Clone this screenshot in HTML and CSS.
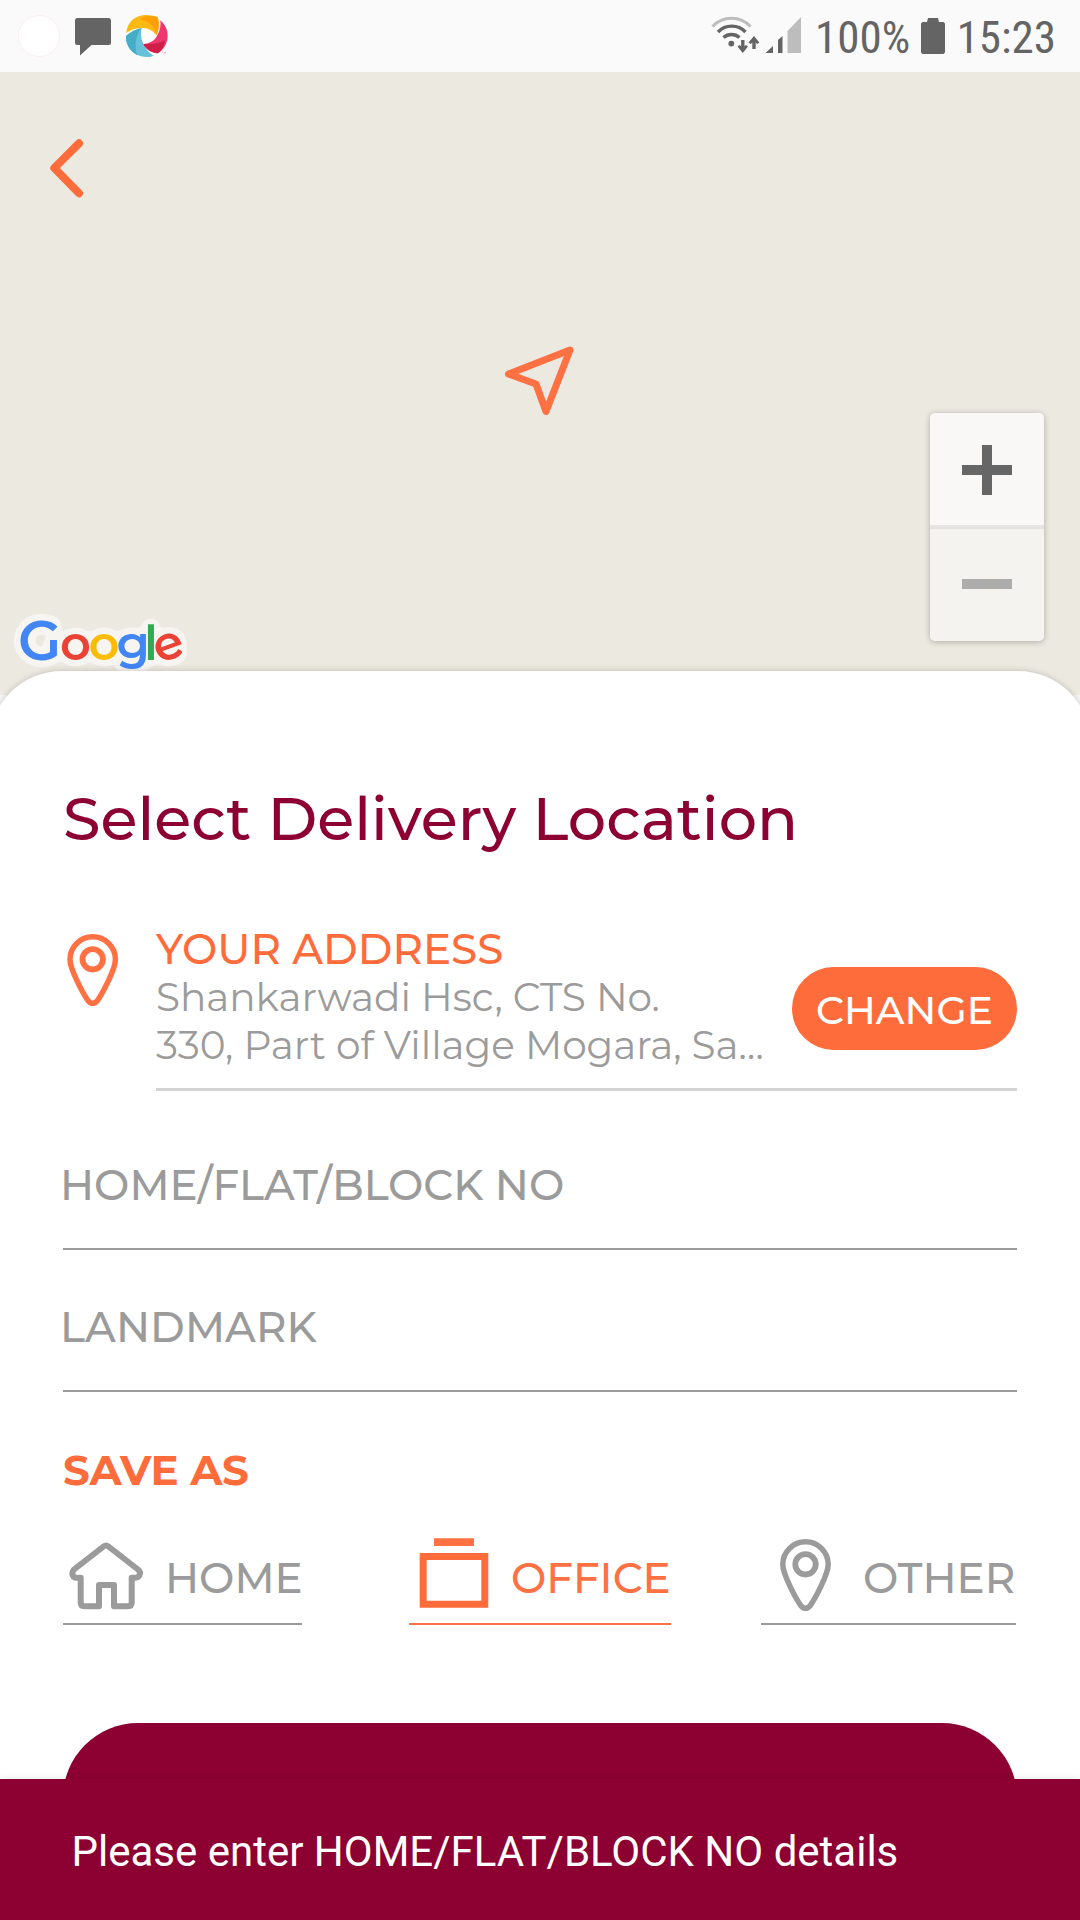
FILE: index.html
```html
<!DOCTYPE html>
<html lang="en">
<head>
<meta charset="utf-8">
<title>Select Delivery Location</title>
<link rel="stylesheet" href="styles.css">
</head>
<body>
<div class="screen">
  <header class="status">
    <div class="notifications">
      <span class="app-dot"></span>
      <svg class="chat" viewBox="0 0 36 38"><path d="M2.500 0h31A2.500 2.500 0 0 1 36 2.500v22a2.500 2.500 0 0 1-2.500 2.500H16.500L5 37.500V27H2.500A2.500 2.500 0 0 1 0 24.500v-22A2.500 2.500 0 0 1 2.500 0z" fill="#646464"/></svg>
      <svg class="swirl" viewBox="376 42 130 130">
        <circle cx="446" cy="108" r="30" fill="#fff"/>
        <path d="M380 99C382 68 405 45 441 45c14 0 25 3 33 7 6 18 4 40-4 54-8-12-22-22-42-22-20 0-36 6-48 15z" fill="#fdb913"/>
        <path d="M420 58c8-8 32-14 54-6 6 18 4 40-4 54-4-22-18-42-50-48z" fill="#fd9f06"/>
        <path d="M482 61c16 14 22 31 22 47 0 22-12 42-30 52-18-2-36-12-44-28 20-2 36-10 44-28 8-14 10-29 8-43z" fill="#ef366f"/>
        <path d="M430 132c25 3 49-2 66-11-2 19-10 33-22 39-18-2-36-12-44-28z" fill="#cf1f49"/>
        <path d="M379 108c13-12 29-20 47-24-4 16-2 36 8 54 8 14 18 24 28 29-10 4-16 4-21 4-36 0-63-29-62-63z" fill="#65c2da"/>
        <path d="M379 108c13-12 29-20 47-24-18 21-24 56-12 82-22-11-36-31-35-58z" fill="#46adc7"/>
        <path d="M487 157h4M494 161v-4l2 2 2-2v4" fill="none" stroke="#ef7f9f" stroke-width="1.500"/>
      </svg>
    </div>
    <div class="system">
      <svg class="signals" viewBox="0 0 115 72">
        <g fill="none">
          <path d="M12.500 26.500A26 26 0 0 1 50.500 26.500" stroke="#bdbdbd" stroke-width="3.200"/>
          <path d="M18 32A19 19 0 0 1 45.500 32" stroke="#646464" stroke-width="3.400"/>
          <path d="M23.500 37.500A12 12 0 0 1 39.500 37.500" stroke="#646464" stroke-width="3.400"/>
          <path d="M42.800 40v10M54 49V39" stroke="#646464" stroke-width="3.400"/>
        </g>
        <circle cx="31.300" cy="43.600" r="2.900" fill="#646464"/>
        <path d="M37.500 46.500l5.300 6.500 5.200-6.500-2-1.500-3.200 2.500-3.300-2.500zM48.500 42.500L54 36l5.300 6.500-2 1.500-3.300-2.500-3.300 2.500z" fill="#646464"/>
        <path d="M65.500 53l7.500-7v7zM78 40l4.500-4v17H78z" fill="#646464"/>
        <path d="M87.500 31L101 17v36H87.500z" fill="#bdbdbd"/>
      </svg>
      <span class="battery-level">100%</span>
      <svg class="battery" viewBox="0 0 24 36"><path d="M7 0h10l1 4h4.500L24 5.500V34.500L22.500 36h-21L0 34.500V5.500L1.500 4H6z" fill="#646464"/></svg>
      <span class="clock">15:23</span>
    </div>
  </header>

  <section class="map">
    <svg class="back" viewBox="0 0 40 64"><path d="M32 7.300L7.300 32 32 57.300" fill="none" stroke="#ff6c3b" stroke-width="8" stroke-linecap="round" stroke-linejoin="round"/></svg>
    <svg class="locate" viewBox="0 0 80 80"><path d="M8.500 34L70 10 46 71.500 36 44z" fill="none" stroke="#ff7043" stroke-width="7" stroke-linejoin="round"/></svg>
    <div class="zoom">
      <div class="zoom-in"><svg viewBox="0 0 50 50"><path d="M20 0h10v20h20v10H30v20H20V30H0V20h20z" fill="#666"/></svg></div>
      <div class="zoom-out"><svg viewBox="0 0 50 50"><path d="M0 20h50v10H0z" fill="#adadab"/></svg></div>
    </div>
    <svg class="google" viewBox="0 0 220 90">
      <filter id="halo" filterUnits="userSpaceOnUse" x="0" y="0" width="220" height="90" color-interpolation-filters="sRGB">
        <feGaussianBlur in="SourceAlpha" stdDeviation="4" result="soft"/>
        <feComponentTransfer in="soft" result="edge"><feFuncA type="linear" slope="28" intercept="-0.900"/></feComponentTransfer>
        <feFlood flood-color="#f6f5f2"/>
        <feComposite in2="edge" operator="in" result="outline"/>
        <feMerge><feMergeNode in="outline"/><feMergeNode in="SourceGraphic"/></feMerge>
      </filter>
      <text y="50" filter="url(#halo)"><tspan class="big" x="18" fill="#4285f4">G</tspan><tspan x="60" fill="#ea4335">o</tspan><tspan x="88.500" fill="#fbbc05">o</tspan><tspan x="116.500" fill="#4285f4">g</tspan><tspan x="144" fill="#34a853">l</tspan><tspan x="159" y="54" rotate="-20" fill="#ea4335">e</tspan></text>
    </svg>
  </section>

  <main class="sheet">
    <h1 class="title">Select Delivery Location</h1>

    <section class="address">
      <svg class="address-pin" viewBox="0 0 93 90"><g transform="translate(-14.800 3)" fill="none" stroke="#ff7043"><path stroke-width="5.500" d="M44.500 8.800C57 8.800 67.200 19 67.200 31.500C67.200 41 55 64 49.300 72.600Q44.500 78 39.700 72.600C34 64 21.800 41 21.800 31.500C21.800 19 32 8.800 44.500 8.800z"/><circle cx="44.500" cy="31.300" r="10.200" stroke-width="5.800"/></g></svg>
      <div class="address-body">
        <div class="address-text">
          <h2 class="address-label">YOUR ADDRESS</h2>
          <p class="address-lines">Shankarwadi Hsc, CTS No.<br>330, Part of Village Mogara, Sa…</p>
        </div>
        <button class="change">CHANGE</button>
      </div>
    </section>

    <div class="field">HOME/FLAT/BLOCK NO</div>
    <div class="field landmark">LANDMARK</div>

    <h2 class="save-as">SAVE AS</h2>
    <div class="options">
      <div class="option home">
        <svg viewBox="0 0 102 90"><path d="M40.500 13.500Q43 11.500 45.500 13.500L75 36.500Q78 39 76.500 42Q75.500 44.700 72.500 44.700H68.700V69.500Q68.700 73.300 65 73.300H51V52H36V73.300H21.500Q17.700 73.300 17.700 69.500V44.700H13.500Q10.500 44.700 9.600 42Q8.800 39 11 36.500z" fill="none" stroke="#9b9b9b" stroke-width="6" stroke-linejoin="round"/></svg>
        <span>HOME</span>
      </div>
      <div class="option office">
        <svg viewBox="0 0 102 90"><path d="M25 5.300h40v7.700H25z" fill="#ff7043"/><path d="M14.200 23.500h61.600v47.700H14.200z" fill="none" stroke="#ff6c3b" stroke-width="7"/></svg>
        <span>OFFICE</span>
      </div>
      <div class="option other">
        <svg viewBox="0 0 102 90"><g fill="none" stroke="#9b9b9b"><path stroke-width="5.500" d="M44.500 8.800C57 8.800 67.200 19 67.200 31.500C67.200 41 55 64 49.300 72.600Q44.500 78 39.700 72.600C34 64 21.800 41 21.800 31.500C21.800 19 32 8.800 44.500 8.800z"/><circle cx="44.500" cy="31.300" r="10.200" stroke-width="5.800"/></g></svg>
        <span>OTHER</span>
      </div>
    </div>

    <div class="submit"></div>
  </main>

  <div class="snackbar">Please enter HOME/FLAT/BLOCK NO details</div>
</div>
</body>
</html>
```
FILE: styles.css
```css
* { box-sizing: border-box; margin: 0; padding: 0; }

body {
  font-family: Montserrat, Inter, sans-serif;
  font-weight: 500;
  color: #9b9b9b;
}

svg { display: block; flex: none; }

.screen {
  position: relative;
  display: flex;
  flex-direction: column;
  width: 1080px;
  height: 1920px;
  overflow: hidden;
  background: #f6f6f6;
}

/* Status bar */
.status {
  display: flex;
  flex: none;
  justify-content: space-between;
  height: 72px;
  padding: 0 24px 0 18px;
  background: #fafafa;
}

.notifications { display: flex; align-items: flex-start; padding-top: 14px; }
.app-dot { width: 42px; height: 42px; margin-top: 1px; border: 1px solid #fbeeee; border-radius: 50%; background: #fff; }
.chat { width: 36px; height: 38px; margin: 4px 14px 0 15px; }
.swirl { width: 43.3px; height: 43.3px; }

.system {
  display: flex;
  width: 356px;
  color: #646464;
  font: 400 45px/72px "Roboto Condensed", Roboto, sans-serif;
}
.system span { padding-top: 1.6px; }
.signals { width: 115px; height: 72px; }
.battery-level { width: 106px; }
.battery { width: 24px; height: 36px; margin: 18px 12px 0 0; }

/* Map */
.map { position: relative; flex: none; height: 623px; background: #ece9e1; }
.back { position: absolute; left: 47px; top: 64px; width: 40px; height: 64px; }
.locate { position: absolute; left: 500px; top: 268px; width: 80px; height: 80px; }

.zoom {
  position: absolute;
  right: 36px;
  top: 341px;
  width: 114px;
  border-radius: 5px;
  box-shadow: 0 1px 6px rgba(0, 0, 0, .27);
  overflow: hidden;
}
.zoom-in, .zoom-out { display: flex; justify-content: center; height: 114px; }
.zoom svg { width: 50px; height: 50px; margin-top: 32px; }
.zoom-in { border-bottom: 2px solid #e6e5e3; background: #f9f8f6; }
.zoom-out { border-top: 2px solid #e4e3df; background: #f4f3ef; }
.zoom-out svg { margin-top: 30px; }

.google { position: absolute; left: 0; top: 538px; width: 220px; height: 90px; font-size: 48px; font-weight: 600; }
.google .big { font-size: 56px; }

/* Bottom sheet */
.sheet {
  position: relative;
  flex: none;
  height: 1249px;
  margin: -24px -11px 0;
  padding: 111px 74px 0;
  border-radius: 73px 73px 0 0;
  background: #fff;
  box-shadow: 0 0 6px rgba(0, 0, 0, .2);
}

.title { color: #8c0032; font-size: 60.4px; font-weight: 500; line-height: 74px; white-space: nowrap; }

.address { display: flex; margin-top: 69px; }
.address-pin { width: 93px; height: 90px; }
.address-body {
  display: flex;
  flex: 1;
  justify-content: space-between;
  height: 166px;
  border-bottom: 3px solid #d3d3d3;
}
.address-text { white-space: nowrap; }
.address-label { color: #ff6c3b; font-size: 42px; font-weight: 500; line-height: 48px; }
.address-lines { font-size: 39px; font-weight: 400; line-height: 48px; letter-spacing: -.04px; }
.change {
  width: 225px;
  height: 83px;
  margin-top: 42px;
  border: 0;
  border-radius: 42px;
  background: #ff6c3b;
  color: #fff;
  font: 500 39.2px/86px Montserrat, Inter, sans-serif;
}

.field {
  height: 91px;
  margin-top: 68px;
  border-bottom: 2px solid #9b9b9b;
  font-size: 42px;
  line-height: 52px;
  text-indent: -3px;
}
.landmark { margin-top: 51px; letter-spacing: .1px; }

.save-as { margin-top: 53px; color: #ff6c3b; font-size: 42px; font-weight: 700; line-height: 50px; letter-spacing: -.2px; }

.options { display: flex; margin-top: 35px; }
.option {
  display: flex;
  align-items: center;
  height: 95px;
  padding-top: 3px;
  border-bottom: 2px solid #9b9b9b;
  font-size: 42px;
  line-height: 50px;
}
.option svg { width: 102px; height: 90px; }
.home { width: 239px; }
.office { width: 262px; margin-left: 107px; border-color: #ff7043; color: #ff7043; }
.other { width: 255px; margin-left: 90px; }

.submit { height: 150px; margin-top: 98px; border-radius: 75px; background: #8c0032; }

.snackbar {
  position: absolute;
  left: 0;
  right: 0;
  bottom: 0;
  height: 141px;
  padding: 48px 71.5px;
  background: #8c0032;
  box-shadow: 0 0 8px rgba(0, 0, 0, .1);
  color: #fff;
  font: 400 42px/50px Roboto, sans-serif;
}
```
